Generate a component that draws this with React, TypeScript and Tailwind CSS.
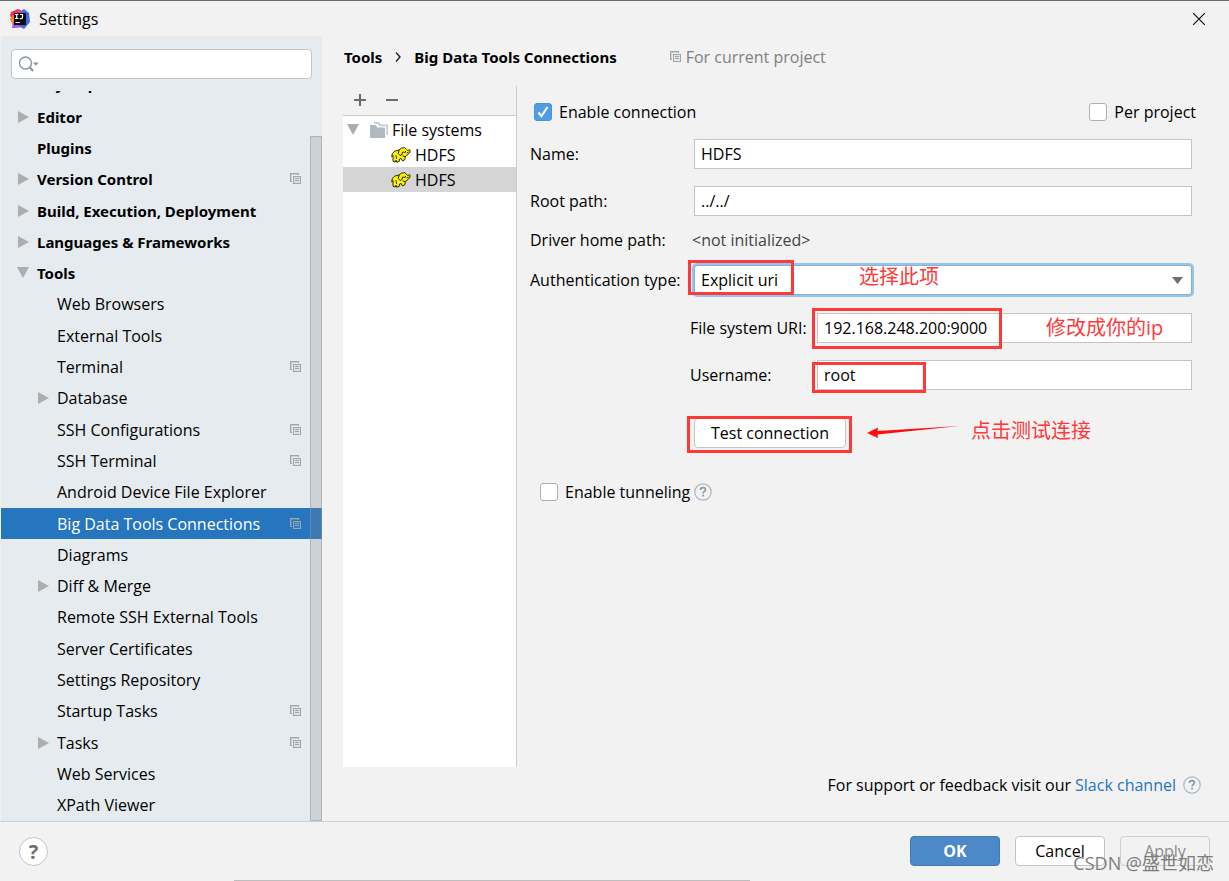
import { useState, type ReactNode } from "react";

type Node = {
  label: string;
  level: 0 | 1;
  state?: "open" | "closed";
  project?: boolean;
  selected?: boolean;
};

const NODES: Node[] = [
  { label: "Editor", level: 0, state: "closed" },
  { label: "Plugins", level: 0 },
  { label: "Version Control", level: 0, state: "closed", project: true },
  { label: "Build, Execution, Deployment", level: 0, state: "closed" },
  { label: "Languages & Frameworks", level: 0, state: "closed" },
  { label: "Tools", level: 0, state: "open" },
  { label: "Web Browsers", level: 1 },
  { label: "External Tools", level: 1 },
  { label: "Terminal", level: 1, project: true },
  { label: "Database", level: 1, state: "closed" },
  { label: "SSH Configurations", level: 1, project: true },
  { label: "SSH Terminal", level: 1, project: true },
  { label: "Android Device File Explorer", level: 1 },
  { label: "Big Data Tools Connections", level: 1, project: true, selected: true },
  { label: "Diagrams", level: 1 },
  { label: "Diff & Merge", level: 1, state: "closed" },
  { label: "Remote SSH External Tools", level: 1 },
  { label: "Server Certificates", level: 1 },
  { label: "Settings Repository", level: 1 },
  { label: "Startup Tasks", level: 1, project: true },
  { label: "Tasks", level: 1, state: "closed", project: true },
  { label: "Web Services", level: 1 },
  { label: "XPath Viewer", level: 1 },
];

function AppLogo() {
  return (
    <svg viewBox="0 0 20 20" className="size-5" aria-hidden="true">
      <path d="M1 3 8 0l5 4-4 10-8-2 1-3-2-2z" fill="#fe2857" />
      <path d="M0 10l3-4 3 8-3 2z" fill="#fc801d" />
      <path d="M2 19l1-6 8 3 2 2-8 1z" fill="#b74af7" />
      <path d="M11 2l3-2 5 4 1 9-6 7-5-3 4-6z" fill="#3b6cf0" />
      <path d="M8 0l3 1 1 4-5-2z" fill="#f0389a" />
      <rect x="4" y="4" width="12" height="12" fill="#0a0a0a" />
      <path d="M5 5.500h3.500M6.700 5.500v4M5 9.500h3.500M10 5.500h2.500v3q0 1.200-1.300 1.200H9.700" fill="none" stroke="#fff" strokeWidth="1.200" />
      <path d="M5.500 13.500h4.500" stroke="#ddd" strokeWidth="1" />
    </svg>
  );
}

function ProjectIcon() {
  return (
    <svg viewBox="0 0 12 12" className="size-3 shrink-0" aria-hidden="true" fill="#9aa7b0" shapeRendering="crispEdges">
      <path d="M0 0h9v2H8V1H1v7h1v1H0z" />
      <path d="M1 1h7v1H2v6H1z" opacity=".4" />
      <path fillRule="evenodd" d="M3 3h8v8H3zM4 4v6h6V4z" />
      <path d="M4 4h6v6H4z" opacity=".15" />
      <path d="M5 5h4v1H5zM5 7h4v1H5z" />
    </svg>
  );
}

function Triangle({ open }: { open: boolean }) {
  return (
    <svg viewBox="0 0 12 12" className="size-3" aria-hidden="true" fill="#adadad">
      {open ? <path d="M0 0h12L6 11z" /> : <path d="M1 0l11 6-11 6z" />}
    </svg>
  );
}

function HelpIcon() {
  return (
    <svg viewBox="0 0 18 18" className="size-[18px]" aria-hidden="true" fill="none">
      <circle cx="9" cy="9" r="8.200" stroke="#adb7be" strokeWidth="1.200" />
      <path d="M6.500 7c0-1.500 1-2.400 2.500-2.400s2.500.9 2.500 2.200c0 1.600-2.400 1.700-2.400 3.600" stroke="#8d9aa3" strokeWidth="1.700" />
      <rect x="8.200" y="11.800" width="1.800" height="1.700" fill="#8d9aa3" />
    </svg>
  );
}

function Elephant() {
  return (
    <svg viewBox="0 0 20 16" className="h-4 w-5 shrink-0" aria-hidden="true" strokeLinejoin="round" strokeLinecap="round">
      <path
        d="M1.500 6.500 3.500 4.200 8 3 10.500 1.200 13.500.6 15.500 2.200 17 3.800 18.300 2.300 19.200 3.800 18.500 6 16.500 7.500 15.500 9 14.200 9.500 14 12.500 11.500 14 10.200 11.500 8.500 12 8.300 14.300 5.800 15.300 5 13.200 4.200 15 2 14.200 2 11 2.200 8.500 1 9.500z"
        fill="#fbf205"
        stroke="#2d2b08"
        strokeWidth="1"
      />
      <path d="M8 3.200 7.300 6.500 9 8.500l2-1 .5-2.500 2 .3M14.500 4.300v.8M5 8.500l.5 3M12 9l2 .5M16 5.800l1.200-.6" fill="none" stroke="#2d2b08" strokeWidth="1" />
    </svg>
  );
}

function Tick({ label, initial = false }: { label: string; initial?: boolean }) {
  const [on, setOn] = useState(initial);
  return (
    <label className="flex items-center gap-[7px]">
      <span className="grid">
        <input
          type="checkbox"
          checked={on}
          onChange={() => setOn(!on)}
          className="col-start-1 row-start-1 size-[18px] appearance-none rounded-[3px] border border-[#b0b0b0] bg-white checked:border-[#4594df] checked:bg-[#4f9ee3]"
        />
        {on && (
          <svg viewBox="0 0 18 18" className="pointer-events-none col-start-1 row-start-1 size-[18px]" fill="none" stroke="#fff" strokeWidth="2" aria-hidden="true">
            <path d="M4.500 9.500l3 3.500 6-9" />
          </svg>
        )}
      </span>
      {label}
    </label>
  );
}

function Mark({ className }: { className: string }) {
  return <span aria-hidden="true" className={`pointer-events-none absolute border-3 border-[#fd3a3a] ${className}`} />;
}

function Note({ className, children }: { className: string; children: ReactNode }) {
  return <span className={`pointer-events-none absolute text-xl leading-6 whitespace-nowrap text-[#fd3a3a] ${className}`}>{children}</span>;
}

const bold = "font-['Noto_Sans',sans-serif] text-[15px] font-bold";
const field = "h-[30px] w-full border border-[#c4c4c4] bg-white px-1.5 outline-none";
const button = "h-[30px] w-[90px] rounded-[4px] border";

function Sidebar() {
  return (
    <aside className="flex w-[322px] shrink-0 flex-col border-l border-[#f2f2f2] bg-[#e6ebef]">
      <div className="px-[10px] pt-[13px]">
        <div className="flex h-[30px] items-center rounded-[4px] border border-[#c2c5c8] bg-white pl-[7px]">
          <svg viewBox="0 0 22 18" className="h-[18px] w-[22px]" fill="none" stroke="#8a969e" strokeWidth="1.400" aria-hidden="true">
            <circle cx="6.500" cy="8" r="6" />
            <path d="M11 12.500l3 3.500" strokeWidth="2" />
            <path d="M14 7.500h5.500l-2.700 3.200z" fill="#8a969e" stroke="none" />
          </svg>
          <input type="search" aria-label="Search settings" className="min-w-0 flex-1 bg-transparent outline-none" />
        </div>
      </div>
      <nav aria-label="Settings" className="relative mt-3 flex flex-1 flex-col">
        <div className={`flex h-[10px] items-end overflow-hidden pl-9 ${bold}`}>
          <span className="pb-[7px]">Keymap</span>
        </div>
        <ul className="flex flex-1 flex-col">
          {NODES.map((n) => (
            <li key={n.label} className={`flex min-h-6 flex-1 ${n.selected ? "bg-[#2675bf] text-white" : ""}`}>
              <a href="#" className={`flex flex-1 items-center pr-[20px] ${n.level ? "pl-9" : `pl-4 ${bold}`}`}>
                <span className="w-5 shrink-0">{n.state && <Triangle open={n.state === "open"} />}</span>
                <span className="flex-1">{n.label}</span>
                {n.project && <ProjectIcon />}
              </a>
            </li>
          ))}
        </ul>
        <div className="absolute top-[45px] right-0 bottom-0 w-3 border border-[#8f959a]/50 bg-[#84878c]/25" />
      </nav>
    </aside>
  );
}

function Connections() {
  return (
    <section className="flex w-[174px] shrink-0 flex-col border-r border-[#cbcbcb]">
      <div className="flex h-[29px] items-center gap-4 pl-[9px]">
        <button aria-label="Add" className="size-4">
          <svg viewBox="0 0 16 16" stroke="#6e6e6e" strokeWidth="2" aria-hidden="true"><path d="M8 1v12M2 7h12" /></svg>
        </button>
        <button aria-label="Remove" className="size-4">
          <svg viewBox="0 0 16 16" stroke="#6e6e6e" strokeWidth="2" aria-hidden="true"><path d="M2 7h12" /></svg>
        </button>
      </div>
      <ul className="flex-1 border-t border-[#cbcbcb] bg-white pt-px">
        <li className="flex h-[25px] items-center pl-1">
          <Triangle open />
          <svg viewBox="0 0 18 16" className="mr-1 ml-[11px] h-4 w-[18px]" fill="#afb9c0" aria-hidden="true">
            <path d="M0 3h5.500l2 2.500H15V16H0z" />
            <path d="M4 0h4.500l2 2.500H18V13h-1.700V4.200H9.500L7.500 1.700H4z" opacity=".75" />
          </svg>
          File systems
        </li>
        <li className="flex h-[25px] items-center gap-1 pl-12"><Elephant />HDFS</li>
        <li className="flex h-[25px] items-center gap-1 bg-[#d5d5d5] pl-12"><Elephant />HDFS</li>
      </ul>
    </section>
  );
}

function ConnectionForm() {
  return (
    <form className="flex min-w-0 flex-1 flex-col pt-[14px] pr-[37px] pl-[13px]" onSubmit={(e) => e.preventDefault()}>
      <div className="-mr-1 flex h-6 items-center justify-between pl-1">
        <Tick label="Enable connection" initial />
        <Tick label="Per project" />
      </div>
      <div className="mt-[15px] flex items-center">
        <label htmlFor="name" className="w-[164px] shrink-0">Name:</label>
        <input id="name" defaultValue="HDFS" className={field} />
      </div>
      <div className="mt-[17px] flex items-center">
        <label htmlFor="root" className="w-[164px] shrink-0">Root path:</label>
        <input id="root" defaultValue="../../" className={field} />
      </div>
      <div className="mt-3 flex h-6 items-center">
        <span className="w-[162px] shrink-0">Driver home path:</span>
        <span className="text-[#444]">&lt;not initialized&gt;</span>
      </div>
      <div className="mt-3 flex h-8 items-center">
        <label htmlFor="auth" className="w-[164px] shrink-0">Authentication type:</label>
        <div className="relative flex-1">
          <select id="auth" className="block h-[30px] w-full appearance-none rounded-[3px] border border-[#87afda] bg-white px-1.5 ring-2 ring-[#97c3f3] outline-none">
            <option>Explicit uri</option>
          </select>
          <svg viewBox="0 0 11 7" className="pointer-events-none absolute top-3 right-[9px] h-[7px] w-[11px]" fill="#6e6e6e" aria-hidden="true"><path d="M0 0h11L5.500 7z" /></svg>
          <Mark className="-top-[5px] -left-1.5 h-[35px] w-[106px]" />
          <Note className="top-0 left-[165px]">选择此项</Note>
        </div>
      </div>
      <div className="mt-[17px] flex items-center pl-40">
        <label htmlFor="uri" className="w-[127px] shrink-0">File system URI:</label>
        <div className="relative flex-1">
          <input id="uri" defaultValue="192.168.248.200:9000" className={field} />
          <Mark className="-top-[5px] -left-[5px] h-[41px] w-[190px]" />
          <Note className="top-[3px] left-[229px]">修改成你的ip</Note>
        </div>
      </div>
      <div className="mt-[17px] flex items-center pl-40">
        <label htmlFor="user" className="w-[127px] shrink-0">Username:</label>
        <div className="relative flex-1">
          <input id="user" defaultValue="root" className={field} />
          <Mark className="top-0.5 -left-[5px] h-[31px] w-[114px]" />
        </div>
      </div>
      <div className="mt-7 flex pl-[164px]">
        <div className="relative">
          <button className="h-[30px] w-[152px] rounded-[4px] border border-[#c4c4c4] bg-white">Test connection</button>
          <Mark className="-top-0.5 -left-[7px] h-[37px] w-[165px]" />
          <svg viewBox="0 0 92 14" className="absolute top-[7px] left-[173px] h-[14px] w-[92px]" fill="#fd0d0d" aria-hidden="true">
            <path d="M0 8 11 2.500 10.500 6 92 1 10.500 9.500 11 13z" />
          </svg>
          <Note className="top-px left-[277px]">点击测试连接</Note>
        </div>
      </div>
      <div className="mt-8 flex h-6 items-center gap-1 pl-[10px]">
        <Tick label="Enable tunneling" />
        <button aria-label="About tunneling"><HelpIcon /></button>
      </div>
    </form>
  );
}

export default function App() {
  return (
    <div className="relative flex min-h-screen flex-col border-t border-[#6c6c6c] bg-[#f2f2f2] font-['Open_Sans','Noto_Sans_CJK_SC',sans-serif] text-base leading-5 text-black">
      <header className="flex h-[35px] items-center gap-[9px] pr-6 pl-[10px]">
        <AppLogo />
        <h1 className="flex-1">Settings</h1>
        <button aria-label="Close">
          <svg viewBox="0 0 12 12" className="size-3" stroke="#111" strokeWidth="1.200" aria-hidden="true"><path d="M0 0l12 12M12 0L0 12" /></svg>
        </button>
      </header>
      <div className="flex flex-1">
        <Sidebar />
        <main className="flex min-w-0 flex-1 flex-col pb-6 pl-[21px]">
          <div className={`flex h-[50px] items-center pb-2 pl-px ${bold}`}>
            <span>Tools</span>
            <svg viewBox="0 0 6 10" className="mx-[13px] h-[10px] w-1.5" fill="none" stroke="#222" strokeWidth="1.400" aria-hidden="true"><path d="M1 .5l4 4.500-4 4.500" /></svg>
            <h2>Big Data Tools Connections</h2>
            <span className="ml-[53px] flex items-center gap-1 font-['Open_Sans',sans-serif] text-base leading-5 font-normal text-[#808080]"><ProjectIcon />For current project</span>
          </div>
          <div className="flex flex-1">
            <Connections />
            <ConnectionForm />
          </div>
          <div className="mt-1.5 flex h-6 items-center justify-end pr-7">
            <span>For support or feedback visit our</span>
            <a href="#" className="mr-[7px] ml-1 text-[#2675bf]">Slack channel</a>
            <button aria-label="Help"><HelpIcon /></button>
          </div>
        </main>
      </div>
      <footer className="flex h-[60px] items-center gap-[15px] border-t border-[#cdd0d3] pr-[19px] pb-px pl-[19px]">
        <button aria-label="Help" className="grid size-[29px] place-items-center rounded-full border border-[#c4c4c4] bg-white text-xl font-bold text-[#6e6e6e]">?</button>
        <span className="flex-1" />
        <button className={`${button} border-[#3f79bb] bg-[#4d89c9] font-bold text-white`}>OK</button>
        <button className={`${button} border-[#c4c4c4] bg-white`}>Cancel</button>
        <button disabled className={`${button} border-[#cfcfcf] text-[#8c8c8c]`}>Apply</button>
      </footer>
      <span className="pointer-events-none absolute right-[15px] bottom-1.5 text-lg leading-6 text-[#7d7d7d]">CSDN @盛世如恋</span>
      <span aria-hidden="true" className="absolute bottom-0 left-[19%] h-px w-[42%] bg-[#bdbdbd]" />
    </div>
  );
}
